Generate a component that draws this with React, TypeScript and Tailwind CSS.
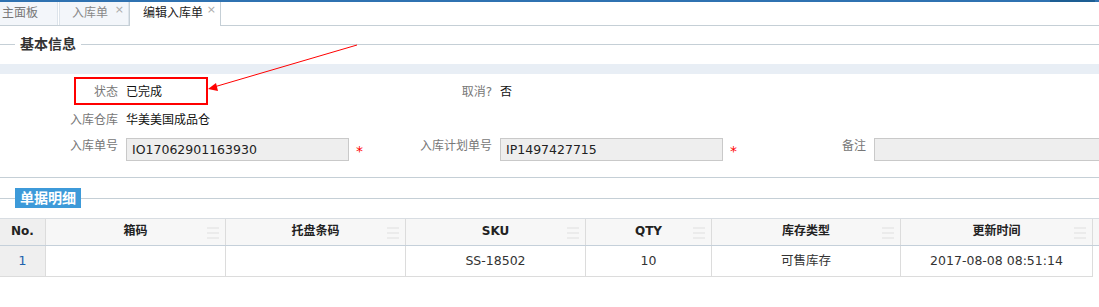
import React from "react";

const font = { fontFamily: '"DejaVu Sans", "Noto Sans CJK SC", sans-serif' };

function Ham() {
  return (
    <span className="absolute right-[6px] top-[8px] flex flex-col gap-[3px]">
      <span className="block w-[12px] h-[2px] bg-[#ebebeb]" />
      <span className="block w-[12px] h-[2px] bg-[#ebebeb]" />
      <span className="block w-[12px] h-[2px] bg-[#ebebeb]" />
    </span>
  );
}

const cols = [
  { t: "箱码", w: "w-[180px]", v: "" },
  { t: "托盘条码", w: "w-[180px]", v: "" },
  { t: "SKU", w: "w-[180px]", v: "SS-18502" },
  { t: "QTY", w: "w-[126px]", v: "10" },
  { t: "库存类型", w: "w-[189px]", v: "可售库存" },
  { t: "更新时间", w: "w-[192px]", v: "2017-08-08 08:51:14" },
];

function Star() {
  return <span className="ml-[7px] mt-[5px] text-[#ff0000] text-[14px] leading-[16px]">*</span>;
}

export default function App() {
  return (
    <div className="w-[1099px] h-[307px] bg-white relative overflow-hidden text-[12px]" style={font}>
      {/* top bar */}
      <div className="flex h-[2px]">
        <div className="flex-1 bg-[#2f72b1]" />
        <div className="w-[45px] bg-[#1d5e93]" />
        <div className="w-[4px] bg-[#2f72b1]" />
      </div>
      {/* tabs */}
      <div className="flex h-[24px] border-b border-[#c5cfd6]">
        <div className="w-[58px] bg-[#f3f6fa] border-r border-[#dde4eb] text-[#777] pl-[2px] leading-[22px]">主面板</div>
        <div className="w-[70px] ml-px bg-[#f3f6fa] border-x border-[#dde4eb] text-[#888] pl-[12px] leading-[22px] relative">
          入库单
          <span className="absolute right-[4px] top-[-3px] text-[#aaa] text-[11px]">×</span>
        </div>
        <div className="w-[92px] h-[24px] bg-white border-x border-[#c5cfd6] text-[#222] pl-[13px] leading-[22px] relative">
          编辑入库单
          <span className="absolute right-[4px] top-[-3px] text-[#aaa] text-[11px]">×</span>
        </div>
      </div>
      {/* legend 1 */}
      <div className="flex items-center h-[38px] pb-[2px]">
        <div className="w-[15px] h-px bg-[#c5cfd6]" />
        <div className="px-[5px] text-[14px] font-bold text-[#333] leading-[18px]">基本信息</div>
        <div className="flex-1 h-px bg-[#c5cfd6]" />
      </div>
      <div className="h-[10px] bg-[#e8eef5]" />
      {/* form */}
      <div className="pt-[4px]">
        <div className="grid grid-cols-[374px_374px_351px] h-[28px] items-center">
          <div className="flex">
            <div className="w-[118px] text-right text-[#777]">状态</div>
            <div className="ml-[8px] text-[#111]">已完成</div>
          </div>
          <div className="flex">
            <div className="w-[118px] text-right text-[#777]">取消?</div>
            <div className="ml-[8px] text-[#111]">否</div>
          </div>
          <div />
        </div>
        <div className="grid grid-cols-[374px_374px_351px] h-[28px] items-center">
          <div className="flex">
            <div className="w-[118px] text-right text-[#777]">入库仓库</div>
            <div className="ml-[8px] text-[#111]">华美美国成品仓</div>
          </div>
          <div />
          <div />
        </div>
        <div className="grid grid-cols-[374px_374px_351px] mt-[4px]">
          <div className="flex items-start">
            <div className="w-[118px] text-right text-[#777] leading-[16px]">入库单号</div>
            <div className="ml-[8px] w-[223px] h-[23px] bg-[#eeeeee] border border-[#c9c9c9] pl-[5px] text-[12.5px] leading-[21px] text-[#222]">IO17062901163930</div>
            <Star />
          </div>
          <div className="flex items-start">
            <div className="w-[118px] text-right text-[#777] leading-[16px]">入库计划单号</div>
            <div className="ml-[8px] w-[223px] h-[23px] bg-[#eeeeee] border border-[#c9c9c9] pl-[5px] text-[12.5px] leading-[21px] text-[#222]">IP1497427715</div>
            <Star />
          </div>
          <div className="flex items-start">
            <div className="w-[118px] text-right text-[#777] leading-[16px] shrink-0">备注</div>
            <div className="ml-[8px] w-[240px] shrink-0 h-[23px] bg-[#eeeeee] border border-[#c9c9c9]" />
          </div>
        </div>
      </div>
      <div className="h-px bg-[#c5cfd6] mt-[16px]" />
      {/* legend 2 */}
      <div className="flex items-center h-[40px]">
        <div className="w-[15px] h-px bg-[#c5cfd6]" />
        <div className="w-[66px] h-[20px] bg-[#3d9ad9] text-white text-[14px] font-bold leading-[20px] text-center">单据明细</div>
        <div className="flex-1 h-px bg-[#c5cfd6]" />
      </div>
      {/* table */}
      <div className="border-t border-[#d8dde2]">
        <div className="flex h-[27px] border-b border-[#c5d0da] bg-[#f7f7f7]">
          <div className="w-[46px] border-r border-[#dcdcdc] bg-[#efefef] text-center font-bold text-[#222] leading-[25px]">No.</div>
          {cols.map((c) => (
            <div key={c.t} className={`${c.w} relative border-r border-[#dcdcdc] text-center font-bold text-[#222] leading-[25px]`}>
              {c.t}
              <Ham />
            </div>
          ))}
          <div className="flex-1" />
        </div>
        <div className="flex h-[31px]">
          <div className="w-[46px] border-r border-b border-[#dcdcdc] bg-[#efefef] text-center text-[#1f63ad] text-[13px] leading-[30px]">1</div>
          {cols.map((c) => (
            <div key={c.t} className={`${c.w} border-r border-b border-[#dcdcdc] text-center text-[#333] text-[12.5px] leading-[30px]`}>
              {c.v}
            </div>
          ))}
        </div>
      </div>
      {/* annotation */}
      <div className="absolute left-[74px] top-[77px] w-[134px] h-[28px] border-2 border-[#ff0000]" />
      <svg className="absolute left-0 top-0" width="1099" height="307">
        <line x1="357" y1="45" x2="214" y2="87" stroke="#ff0000" strokeWidth="1" />
        <polygon points="208,89 216,83 218,91" fill="#ff0000" />
      </svg>
    </div>
  );
}
